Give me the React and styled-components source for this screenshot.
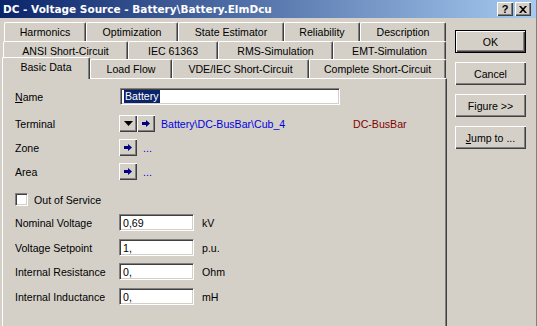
import styled, { createGlobalStyle } from 'styled-components'

const GlobalStyle = createGlobalStyle`
  html, body {
    margin: 0;
    padding: 0;
    background: #d4d0c8;
  }
  body {
    font-family: "Liberation Sans", Arial, sans-serif;
    font-size: 10.6px;
    color: #000;
  }
`

const Window = styled.div`
  width: 537px;
  height: 326px;
  overflow: hidden;
  box-sizing: border-box;
  background: #d4d0c8;
  border-right: 1px solid #808080;
  display: flex;
  flex-direction: column;
`

const TitleBar = styled.div`
  height: 18px;
  flex-shrink: 0;
  display: flex;
  align-items: center;
  padding: 0 5px 0 3px;
  background: linear-gradient(to right, #0a246a, #a6caf0);
  color: #fff;
  font-family: "DejaVu Sans", Verdana, sans-serif;
  font-weight: bold;
  font-size: 10.5px;
`

const TitleText = styled.div`
  flex: 1;
  white-space: nowrap;
`

const TitleButtons = styled.div`
  display: flex;
  gap: 2px;
`

const CaptionButton = styled.div`
  width: 16px;
  height: 14px;
  box-sizing: border-box;
  background: #d4d0c8;
  color: #000;
  display: flex;
  align-items: center;
  justify-content: center;
  font-family: "Liberation Sans", Arial, sans-serif;
  font-weight: bold;
  font-size: 11px;
  box-shadow: inset 1px 1px #fff, inset -1px -1px #404040, inset -2px -2px #808080;
`

const Body = styled.div`
  flex: 1;
  display: flex;
  padding-top: 4px;
`

const TabArea = styled.div`
  width: 445px;
  margin-left: 2px;
  display: flex;
  flex-direction: column;
`

const TabRow = styled.div`
  display: flex;
  align-items: flex-end;
  height: ${p => p.$h}px;
  margin-left: ${p => p.$indent}px;
`

const Tab = styled.div`
  width: ${p => p.$w}px;
  height: ${p => (p.$active ? p.$h + 3 : p.$h)}px;
  margin-bottom: ${p => (p.$active ? -1 : 0)}px;
  position: relative;
  z-index: ${p => (p.$active ? 2 : 0)};
  box-sizing: border-box;
  background: #d4d0c8;
  border-left: 1px solid #fff;
  border-top: 1px solid #fff;
  border-right: 1px solid #404040;
  border-radius: 2px 2px 0 0;
  box-shadow: inset -1px 0 #808080;
  display: flex;
  align-items: center;
  justify-content: center;
  padding-bottom: ${p => (p.$active ? 3 : 0)}px;
  white-space: nowrap;
`

const Panel = styled.div`
  height: 300px;
  box-sizing: border-box;
  border-top: 1px solid #fff;
  border-left: 1px solid #fff;
  border-right: 1px solid #404040;
  box-shadow: inset -1px 0 #808080;
  padding: 9px 0 0 12px;
  display: flex;
  flex-direction: column;
`

const FieldRow = styled.div`
  display: flex;
  align-items: center;
  height: ${p => p.$h || 17}px;
  margin-top: ${p => p.$mt || 0}px;
`

const Label = styled.div`
  width: 104px;
  flex-shrink: 0;
  white-space: nowrap;
`

const TextBox = styled.div`
  width: ${p => p.$w}px;
  height: 17px;
  margin-left: ${p => p.$ml || 0}px;
  box-sizing: border-box;
  background: #fff;
  border: 1px solid;
  border-color: #808080 #fff #fff #808080;
  box-shadow: inset 1px 1px #404040, inset -1px -1px #d4d0c8;
  display: flex;
  align-items: center;
  padding-left: 3px;
  white-space: nowrap;
`

const Selected = styled.span`
  background: #0a246a;
  color: #fff;
  line-height: 13px;
  padding: 0 1px;
`

const Unit = styled.span`
  margin-left: 8px;
`

const SmallButton = styled.div`
  width: 18px;
  height: 17px;
  box-sizing: border-box;
  background: #d4d0c8;
  display: flex;
  align-items: center;
  justify-content: center;
  box-shadow: inset 1px 1px #fff, inset -1px -1px #404040, inset -2px -2px #808080;
`

const Link = styled.span`
  color: #0000e0;
  margin-left: 6px;
  width: ${p => (p.$w ? `${p.$w}px` : 'auto')};
  white-space: nowrap;
`

const ClassName = styled.span`
  color: #800000;
`

const CheckBox = styled.div`
  width: 13px;
  height: 13px;
  box-sizing: border-box;
  background: #fff;
  border: 1px solid;
  border-color: #808080 #fff #fff #808080;
  box-shadow: inset 1px 1px #404040, inset -1px -1px #d4d0c8;
`

const CheckLabel = styled.span`
  margin-left: 6px;
`

const ButtonColumn = styled.div`
  margin-left: 8px;
  padding-top: 8px;
  display: flex;
  flex-direction: column;
  gap: 9px;
`

const PushButton = styled.div`
  width: 71px;
  height: 23px;
  box-sizing: border-box;
  background: #d4d0c8;
  display: flex;
  align-items: center;
  justify-content: center;
  border: ${p => (p.$default ? '1px solid #000' : 'none')};
  box-shadow: inset 1px 1px #fff, inset -1px -1px #404040, inset -2px -2px #808080;
`

const ArrowIcon = () => (
  <svg width="8" height="7" viewBox="0 0 8 7">
    <path d="M0 2h4V0l4 3.5L4 7V5H0z" fill="#000080" />
  </svg>
)

const DropIcon = () => (
  <svg width="9" height="5" viewBox="0 0 9 5">
    <path d="M0 0h9L4.5 5z" fill="#000" />
  </svg>
)

const CloseIcon = () => (
  <svg width="8" height="7" viewBox="0 0 8 7">
    <path d="M0 0h2l2 2.2L6 0h2L5 3.5 8 7H6L4 4.8 2 7H0l3-3.5z" fill="#000" />
  </svg>
)

const rows = [
  { indent: 2, h: 19, tabs: [['Harmonics', 82], ['Optimization', 92], ['State Estimator', 106], ['Reliability', 76], ['Description', 86]] },
  { indent: 1, h: 18, tabs: [['ANSI Short-Circuit', 125], ['IEC 61363', 90], ['RMS-Simulation', 115], ['EMT-Simulation', 113]] },
  { indent: 0, h: 19, tabs: [['Basic Data', 88, true], ['Load Flow', 82], ['VDE/IEC Short-Circuit', 137], ['Complete Short-Circuit', 137]] },
]

const values = [
  ['Nominal Voltage', '0,69', 'kV', 8],
  ['Voltage Setpoint', '1,', 'p.u.', 8],
  ['Internal Resistance', '0,', 'Ohm', 7],
  ['Internal Inductance', '0,', 'mH', 8],
]

export default function App() {
  return (
    <>
      <GlobalStyle />
      <Window>
        <TitleBar>
          <TitleText>DC - Voltage Source - Battery\Battery.ElmDcu</TitleText>
          <TitleButtons>
            <CaptionButton>?</CaptionButton>
            <CaptionButton><CloseIcon /></CaptionButton>
          </TitleButtons>
        </TitleBar>
        <Body>
          <TabArea>
            {rows.map((row, i) => (
              <TabRow key={i} $indent={row.indent} $h={row.h}>
                {row.tabs.map(([name, w, active]) => (
                  <Tab key={name} $w={w} $h={row.h} $active={active}>{name}</Tab>
                ))}
              </TabRow>
            ))}
            <Panel>
              <FieldRow>
                <Label><u>N</u>ame</Label>
                <TextBox $w={220} $ml={1}><Selected>Battery</Selected></TextBox>
              </FieldRow>
              <FieldRow $mt={10}>
                <Label>Terminal</Label>
                <SmallButton><DropIcon /></SmallButton>
                <SmallButton><ArrowIcon /></SmallButton>
                <Link $w={192}>Battery\DC-BusBar\Cub_4</Link>
                <ClassName>DC-BusBar</ClassName>
              </FieldRow>
              <FieldRow $mt={7}>
                <Label>Zone</Label>
                <SmallButton><ArrowIcon /></SmallButton>
                <Link>...</Link>
              </FieldRow>
              <FieldRow $mt={7}>
                <Label>Area</Label>
                <SmallButton><ArrowIcon /></SmallButton>
                <Link>...</Link>
              </FieldRow>
              <FieldRow $mt={13} $h={13}>
                <CheckBox />
                <CheckLabel>Out of Service</CheckLabel>
              </FieldRow>
              {values.map(([label, val, unit, mt]) => (
                <FieldRow key={label} $mt={mt}>
                  <Label>{label}</Label>
                  <TextBox $w={75}>{val}</TextBox>
                  <Unit>{unit}</Unit>
                </FieldRow>
              ))}
            </Panel>
          </TabArea>
          <ButtonColumn>
            <PushButton $default>OK</PushButton>
            <PushButton>Cancel</PushButton>
            <PushButton>Figure &gt;&gt;</PushButton>
            <PushButton><span><u>J</u>ump to ...</span></PushButton>
          </ButtonColumn>
        </Body>
      </Window>
    </>
  )
}
